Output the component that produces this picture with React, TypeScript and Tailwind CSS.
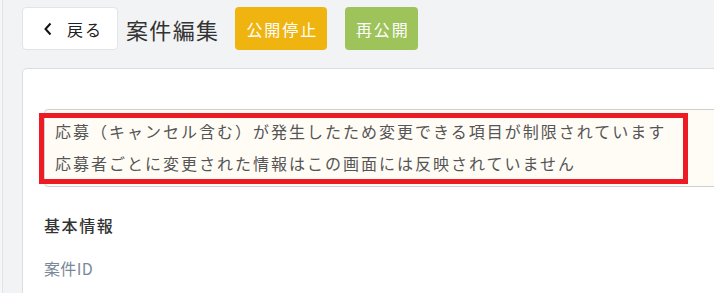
import React from 'react';

const font = "font-['Noto_Sans_CJK_JP','Noto_Sans',sans-serif]";

export default function App() {
    return (
        <div className={`w-[714px] h-[293px] overflow-hidden bg-[#f7f7f8] pl-[2px] ${font}`}>
            <div className="h-full border-l border-[#e2e3e6] bg-[#f2f3f5]">
                {/* Header */}
                <div className="flex items-center pt-[7px] pl-[19px]">
                    <button className="flex items-center h-[43px] w-[96px] bg-white border border-[#e3e4e7] rounded-[4px] pl-[20px] text-[16px] text-[#222] tracking-[0.12em]">
                        <svg width="10" height="16" viewBox="0 0 10 16" className="mr-[14px]">
                            <path d="M7.5 2.5 L2.5 8 L7.5 13.5" fill="none" stroke="#111" strokeWidth="2" />
                        </svg>
                        戻る
                    </button>
                    <h1 className="ml-[8px] text-[22px] text-[#333] tracking-[0.06em] leading-none">案件編集</h1>
                    <button className="ml-[16px] h-[43px] w-[92px] rounded-[4px] bg-[#efb40f] text-white text-[16px] tracking-[0.12em] pl-[2px]">
                        公開停止
                    </button>
                    <button className="ml-[18px] h-[43px] w-[73px] rounded-[4px] bg-[#9dc35a] text-white text-[16px] tracking-[0.12em] pl-[2px]">
                        再公開
                    </button>
                </div>

                {/* Card */}
                <div className="mt-[18px] ml-[19px] w-[740px] bg-white border border-[#dcdde0] rounded-[5px] pt-[40px] pl-[21px]">
                    <div className="relative bg-[#fffcf5] border border-[#cfcfcf] rounded-[4px] pt-[5px] pb-[7px] pl-[10px] text-[16px] leading-[32px] text-[#555] tracking-[0.125em]">
                        <p>応募（キャンセル含む）が発生したため変更できる項目が制限されています</p>
                        <p>応募者ごとに変更された情報はこの画面には反映されていません</p>
                        <div className="absolute left-[-6px] top-[3px] w-[649px] h-[71px] border-[5px] border-[#ec1b24] pointer-events-none" />
                    </div>

                    <h2 className="mt-[26px] text-[16px] text-[#333] font-medium tracking-[0.1em] leading-[24px]">基本情報</h2>
                    <p className="mt-[19px] text-[16px] text-[#7a8899] tracking-[0.02em] leading-[24px]">案件ID</p>
                    <div className="h-[40px]" />
                </div>
            </div>
        </div>
    );
}
